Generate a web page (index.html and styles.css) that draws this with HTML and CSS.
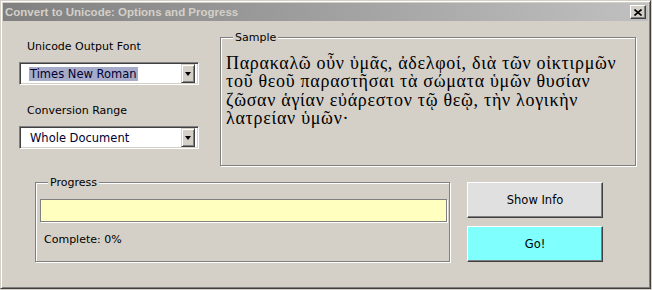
FILE: index.html
```html
<!DOCTYPE html>
<html lang="en">
<head>
    <meta charset="UTF-8">
    <title>Convert to Unicode: Options and Progress</title>
    <link rel="stylesheet" href="styles.css">
</head>
<body>
    <div class="window">
        <div class="titlebar">
            <span class="title">Convert to Unicode: Options and Progress</span>
            <div class="close-btn">
                <svg width="8" height="7" viewBox="0 0 8 7">
                    <path d="M0.5 0.5 L7.5 6.5 M7.5 0.5 L0.5 6.5" stroke="#000" stroke-width="1.6" fill="none"/>
                </svg>
            </div>
        </div>

        <div class="form">
            <div class="top-row">
                <div class="options">
                    <div class="field-label">Unicode Output Font</div>
                    <div class="combo">
                        <span class="combo-value"><span class="selected">Times New Roman</span></span>
                        <span class="combo-arrow"><span class="triangle"></span></span>
                    </div>

                    <div class="field-label">Conversion Range</div>
                    <div class="combo">
                        <span class="combo-value"><span class="plain">Whole Document</span></span>
                        <span class="combo-arrow"><span class="triangle"></span></span>
                    </div>
                </div>

                <div class="group sample">
                    <span class="group-label">Sample</span>
                    <p class="greek">Παρακαλῶ οὖν ὑμᾶς, ἀδελφοί, διὰ τῶν οἰκτιρμῶν<br>τοῦ θεοῦ παραστῆσαι τὰ σώματα ὑμῶν θυσίαν<br>ζῶσαν ἁγίαν εὐάρεστον τῷ θεῷ, τὴν λογικὴν<br>λατρείαν ὑμῶν·</p>
                </div>
            </div>

            <div class="bottom-row">
                <div class="group progress">
                    <span class="group-label">Progress</span>
                    <div class="progress-bar"></div>
                    <div class="progress-text">Complete: 0%</div>
                </div>

                <div class="actions">
                    <div class="btn btn-info">Show Info</div>
                    <div class="btn btn-go">Go!</div>
                </div>
            </div>
        </div>
    </div>
</body>
</html>
```

FILE: styles.css
```css
* {
    margin: 0;
    padding: 0;
    box-sizing: border-box;
}

body {
    background-color: #d4d0c8;
    font-family: "DejaVu Sans", sans-serif;
    font-size: 11px;
    color: #000;
    width: 652px;
    height: 290px;
    overflow: hidden;
}

/* dialog frame */
.window {
    width: 651px;
    height: 289px;
    padding: 2px;
    background-color: #d4d0c8;
    border: 1px solid;
    border-color: #d4d0c8 #404040 #404040 #d4d0c8;
    box-shadow: inset 1px 1px 0 #fff, inset -1px -1px 0 #808080;
}

.titlebar {
    height: 18px;
    display: flex;
    justify-content: space-between;
    align-items: center;
    padding: 0 2px;
    background: linear-gradient(to right, #808080, #c0c0c0);
}

.title {
    font-family: "Liberation Sans", Arial, sans-serif;
    font-weight: bold;
    font-size: 11.5px;
    color: #d4d0c8;
}

.close-btn {
    width: 16px;
    height: 14px;
    display: flex;
    justify-content: center;
    align-items: center;
    background-color: #d4d0c8;
    border: 1px solid;
    border-color: #fff #404040 #404040 #fff;
    box-shadow: inset -1px -1px 0 #808080;
}

.close-btn svg {
    display: block;
}

.form {
    padding-left: 16px;
}

.top-row {
    display: flex;
    gap: 21px;
    padding-top: 16px;
}

.options {
    width: 180px;
    padding-top: 2px;
}

.field-label {
    line-height: 15px;
    margin-left: 8px;
}

.combo + .field-label {
    margin-top: 18px;
}

/* sunken combo box */
.combo {
    margin-top: 8px;
    height: 23px;
    display: flex;
    align-items: center;
    padding: 1px 3px 1px 1px;
    background-color: #fff;
    border: 1px solid;
    border-color: #808080 #fff #fff #808080;
    box-shadow: inset 1px 1px 0 #404040, inset -1px -1px 0 #d4d0c8;
}

.combo-value {
    flex: 1;
    padding-left: 8px;
    color: #000033;
    font-size: 11.5px;
    line-height: 14px;
}

.selected {
    background-color: #a6abc9;
    padding: 0 1px;
}

.plain {
    padding: 0 1px;
}

.combo-arrow {
    width: 14px;
    height: 19px;
    display: flex;
    justify-content: center;
    align-items: center;
    background-color: #d4d0c8;
    border: 1px solid;
    border-color: #d4d0c8 #404040 #404040 #d4d0c8;
    box-shadow: inset 1px 1px 0 #fff, inset -1px -1px 0 #808080;
}

.triangle {
    width: 0;
    height: 0;
    border-top: 4px solid #000;
    border-left: 3.5px solid transparent;
    border-right: 3.5px solid transparent;
}

/* etched group frames */
.group {
    position: relative;
    border: 1px solid #808080;
    box-shadow: inset 1px 1px 0 #fff, 1px 1px 0 #fff;
}

.group-label {
    position: absolute;
    top: -8px;
    left: 12px;
    padding: 0 2px;
    line-height: 15px;
    background-color: #d4d0c8;
}

.sample {
    width: 416px;
    height: 129px;
}

.greek {
    font-family: "Liberation Serif", "Times New Roman", serif;
    font-size: 18px;
    letter-spacing: 0.7px;
    line-height: 18.4px;
    padding: 16px 0 0 5px;
    white-space: nowrap;
}

.bottom-row {
    display: flex;
    align-items: flex-start;
    margin-top: 16px;
}

.progress {
    margin-left: 16px;
    width: 415px;
    height: 80px;
    padding: 16px 0 0 4px;
}

.progress-bar {
    width: 407px;
    height: 23px;
    background-color: #ffffc0;
    border: 1px solid #808080;
    box-shadow: 1px 1px 0 #fff;
}

.progress-text {
    margin: 10px 0 0 4px;
    line-height: 15px;
}

.actions {
    margin-left: 17px;
    display: flex;
    flex-direction: column;
    gap: 8px;
}

.btn {
    width: 136px;
    height: 36px;
    display: flex;
    justify-content: center;
    align-items: center;
    font-size: 11.5px;
    border: 1px solid;
    border-color: #fff #404040 #404040 #fff;
    box-shadow: inset -1px -1px 0 #808080;
}

.btn-info {
    background-color: #e0e0e0;
}

.btn-go {
    background-color: #80ffff;
}
```
